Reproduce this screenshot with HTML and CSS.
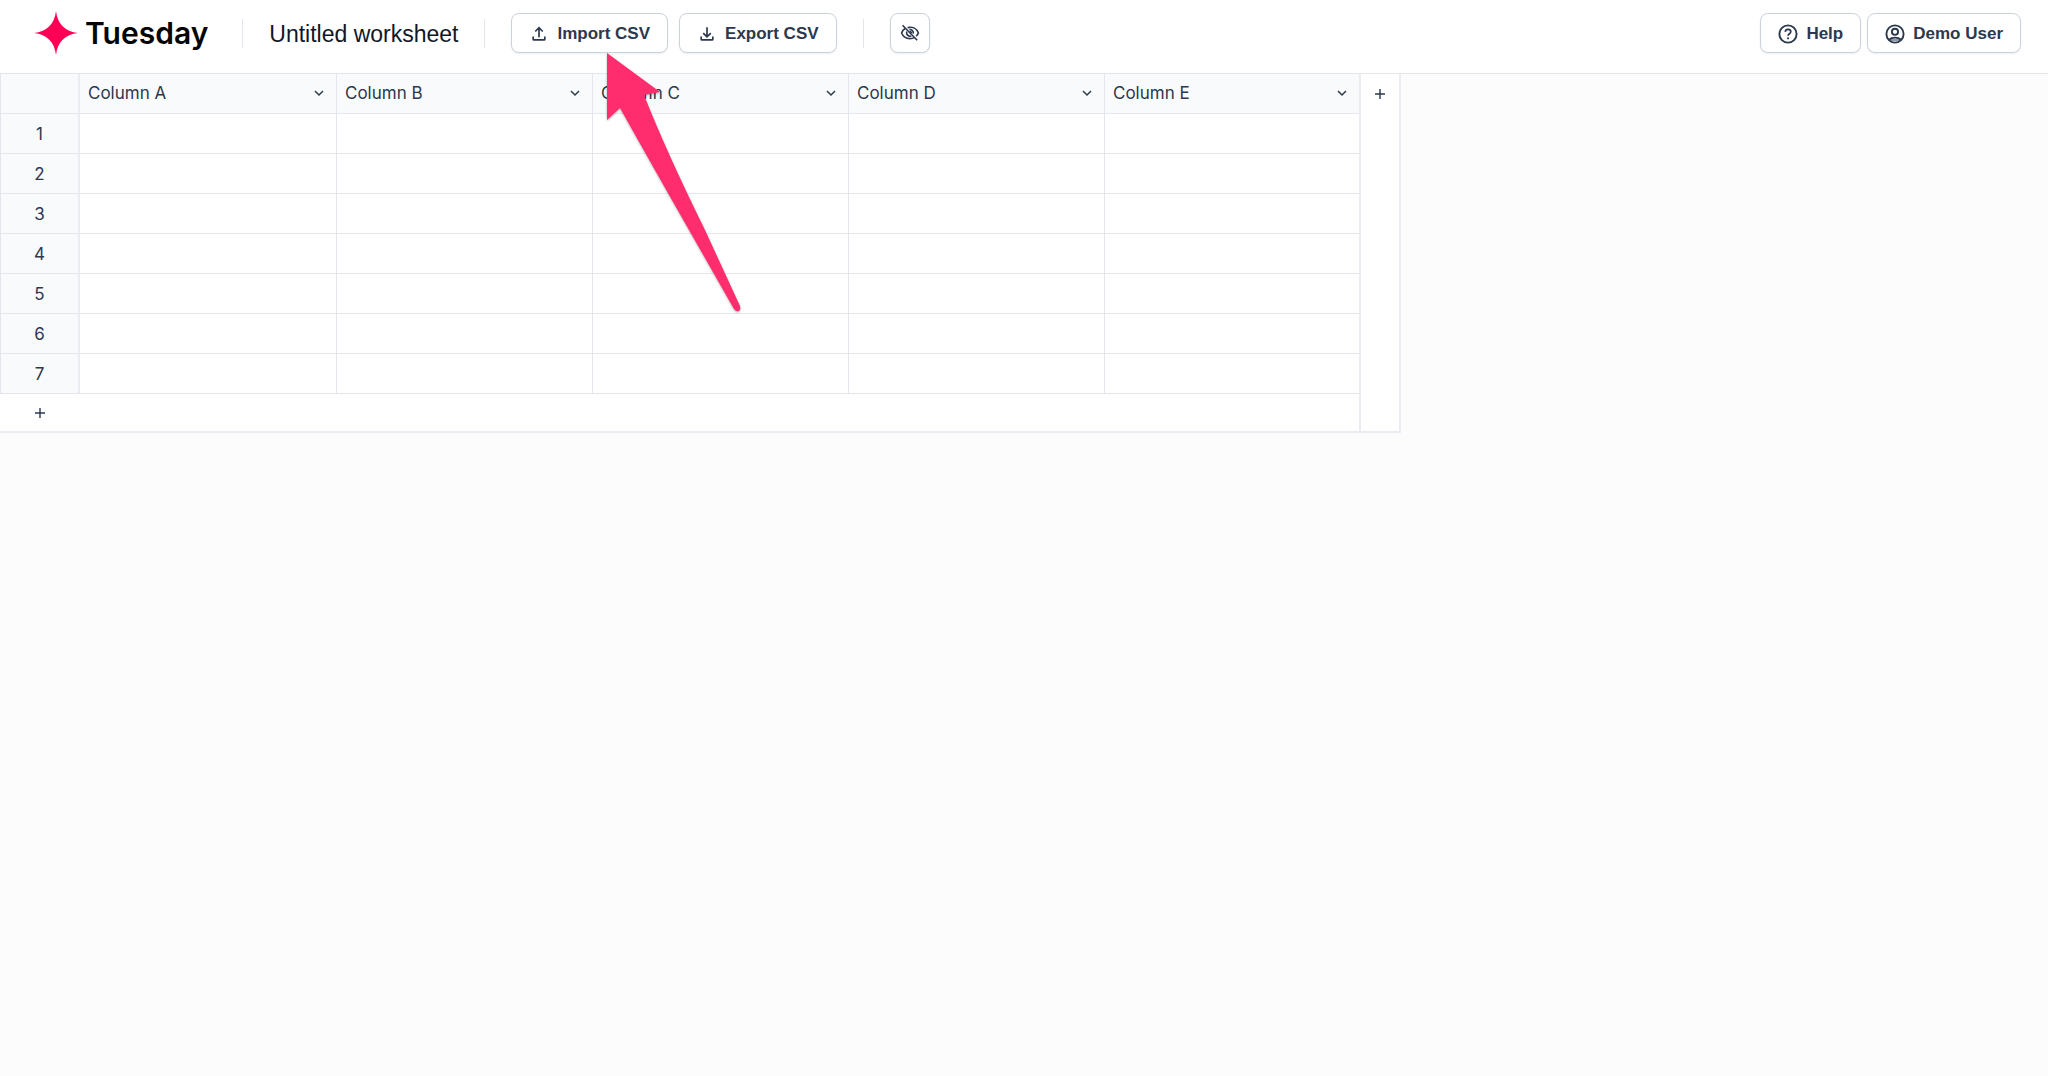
FILE: index.html
```html
<!DOCTYPE html>
<html lang="en">
<head>
    <meta charset="UTF-8">
    <meta name="viewport" content="width=device-width, initial-scale=1.0">
    <title>Untitled worksheet - Tuesday</title>
    <link rel="stylesheet" href="styles.css">
</head>
<body>
    <!-- Shared icons -->
    <svg class="sprite" aria-hidden="true">
        <symbol id="chevron" viewBox="0 0 12 12">
            <path d="M2 4l4 4 4-4" fill="none" stroke="currentColor" stroke-width="1.5"/>
        </symbol>
        <symbol id="plus" viewBox="0 0 12 12">
            <path d="M6 1v10M1 6h10" fill="none" stroke="currentColor" stroke-width="1.4"/>
        </symbol>
    </svg>

    <header class="toolbar">
        <a class="logo" href="#">
            <svg class="logo-mark" viewBox="0 0 44 44" aria-hidden="true">
                <path d="M22 0C23.500 13 31 20.500 44 22C31 23.500 23.500 31 22 44C20.500 31 13 23.500 0 22C13 20.500 20.500 13 22 0Z" fill="#ff0057"/>
            </svg>
            <span>Tuesday</span>
        </a>
        <span class="divider"></span>
        <h1 class="sheet-title">Untitled worksheet</h1>
        <span class="divider"></span>
        <div class="csv-actions">
            <button type="button" class="btn btn-csv">
                <svg class="icon" viewBox="0 0 24 24" aria-hidden="true">
                    <path d="M12 16V5M7.500 9L12 4.500L16.500 9M5 15v3.200q0 .8.800.8h12.400q.8 0 .8-.8V15" fill="none" stroke="currentColor" stroke-width="2"/>
                </svg>
                Import CSV
            </button>
            <button type="button" class="btn btn-csv">
                <svg class="icon" viewBox="0 0 24 24" aria-hidden="true">
                    <path d="M12 4v11M7.500 11L12 15.500L16.500 11M5 15v3.200q0 .8.800.8h12.400q.8 0 .8-.8V15" fill="none" stroke="currentColor" stroke-width="2"/>
                </svg>
                Export CSV
            </button>
        </div>
        <span class="divider"></span>
        <button type="button" class="btn btn-icon" aria-label="Hide columns">
            <svg class="icon" viewBox="0 0 20 20" aria-hidden="true">
                <g fill="none" stroke="currentColor" stroke-width="1.6">
                    <path d="M5.500 5.200C3.700 6.200 2.300 7.900 1.600 10C3 13.600 6.200 15.600 10 15.600C11.600 15.600 13 15.300 14.300 14.600M7.600 4.600C12.600 3.400 16.800 5.700 18.400 10C17.900 11.300 17.200 12.300 16.200 13.200"/>
                    <path d="M6.800 8.500C5.800 11.300 8.300 14 11.300 13M9.400 6.600C11.900 6.300 13.700 8.300 13.300 10.700M9.600 8.600C10.800 8.500 11.500 9.200 11.500 10.200"/>
                    <path d="M2.500 2.300L17.200 17.200"/>
                </g>
            </svg>
        </button>
        <div class="account">
            <button type="button" class="btn btn-account">
                <svg class="icon icon-lg" viewBox="0 0 24 24" aria-hidden="true">
                    <circle cx="12" cy="12" r="8.600" fill="none" stroke="currentColor" stroke-width="1.900"/>
                    <path d="M9.200 9.900C9.400 8.200 10.500 7.300 12 7.300C13.700 7.300 14.800 8.300 14.800 9.700C14.800 11.600 12.200 11.900 12.100 13.700" fill="none" stroke="currentColor" stroke-width="1.700"/>
                    <circle cx="12" cy="16.300" r="1.100" fill="currentColor"/>
                </svg>
                Help
            </button>
            <button type="button" class="btn btn-account">
                <svg class="icon icon-lg" viewBox="0 0 24 24" aria-hidden="true">
                    <g fill="none" stroke="currentColor" stroke-width="1.900">
                        <circle cx="12" cy="12" r="8.600"/>
                        <circle cx="12" cy="9.800" r="3.100"/>
                        <path d="M6 17.800C7.600 16.300 9.600 15.600 12 15.600C14.400 15.600 16.400 16.300 18 17.800"/>
                    </g>
                    <path d="M7.500 18h9" stroke="currentColor" stroke-width="1"/>
                </svg>
                Demo User
            </button>
        </div>
    </header>

    <main class="sheet">
        <table class="grid">
            <thead>
                <tr>
                    <td class="corner"></td>
                    <th scope="col" class="col-first"><div class="column-head">Column A<button type="button" class="menu-btn" aria-label="Column A menu"><svg><use href="#chevron"/></svg></button></div></th>
                    <th scope="col"><div class="column-head">Column B<button type="button" class="menu-btn" aria-label="Column B menu"><svg><use href="#chevron"/></svg></button></div></th>
                    <th scope="col"><div class="column-head">Column C<button type="button" class="menu-btn" aria-label="Column C menu"><svg><use href="#chevron"/></svg></button></div></th>
                    <th scope="col"><div class="column-head">Column D<button type="button" class="menu-btn" aria-label="Column D menu"><svg><use href="#chevron"/></svg></button></div></th>
                    <th scope="col"><div class="column-head">Column E<button type="button" class="menu-btn" aria-label="Column E menu"><svg><use href="#chevron"/></svg></button></div></th>
                </tr>
            </thead>
            <tbody>
                <tr><th scope="row">1</th><td></td><td></td><td></td><td></td><td></td></tr>
                <tr><th scope="row">2</th><td></td><td></td><td></td><td></td><td></td></tr>
                <tr><th scope="row">3</th><td></td><td></td><td></td><td></td><td></td></tr>
                <tr><th scope="row">4</th><td></td><td></td><td></td><td></td><td></td></tr>
                <tr><th scope="row">5</th><td></td><td></td><td></td><td></td><td></td></tr>
                <tr><th scope="row">6</th><td></td><td></td><td></td><td></td><td></td></tr>
                <tr><th scope="row">7</th><td></td><td></td><td></td><td></td><td></td></tr>
            </tbody>
            <tfoot>
                <tr>
                    <td colspan="6"><button type="button" class="add-btn add-row" aria-label="Add row"><svg><use href="#plus"/></svg></button></td>
                </tr>
            </tfoot>
        </table>
        <div class="add-column">
            <button type="button" class="add-btn" aria-label="Add column"><svg><use href="#plus"/></svg></button>
        </div>
    </main>

    <!-- Arrow pointing at Import CSV -->
    <svg class="pointer" viewBox="0 0 136 262" aria-hidden="true">
        <path d="M2 1L55 40L39 43Q62 101 100 178L135 254Q136 257 134 259Q131 260 129 257L88 185Q48 115 15 56L2 68Z" fill="#ff2d6d"/>
    </svg>
</body>
</html>
```
FILE: styles.css
```css
* {
    box-sizing: border-box;
}
body {
    margin: 0;
    background: #fcfcfc;
    color: #2b384e;
    font-family: Inter, sans-serif;
    font-size: 17px;
}
.sprite {
    display: none;
}
button {
    font: inherit;
    color: inherit;
    cursor: pointer;
}

/* Toolbar */
.toolbar {
    display: flex;
    align-items: center;
    gap: 26px;
    padding: 11px 27px 18px 34px;
    background: #fff;
    border-bottom: 1px solid #e4e6ee;
}
.logo {
    display: flex;
    align-items: center;
    gap: 7px;
    margin-right: 8px;
    color: #050505;
    font-size: 30px;
    font-weight: 600;
    line-height: 44px;
    text-decoration: none;
}
.logo-mark {
    width: 44px;
    height: 44px;
}
.divider {
    width: 1px;
    height: 29px;
    background: #e2e5ec;
}
.sheet-title {
    margin: 0;
    padding-top: 1px;
    color: #0f172a;
    font-family: "Liberation Sans", Arial, sans-serif;
    font-size: 23px;
    font-weight: 400;
    line-height: 30px;
}
.csv-actions {
    display: flex;
    gap: 11px;
}
.btn {
    display: flex;
    align-items: center;
    height: 40px;
    padding: 2px 17px 0 15px;
    background: #fff;
    border: 1px solid #cbd2dd;
    border-radius: 8px;
    box-shadow: 0 1px 2px rgba(15, 23, 42, 0.08);
    font-family: "Liberation Sans", Arial, sans-serif;
    font-weight: 700;
    white-space: nowrap;
}
.btn:hover {
    background: #f8f9fc;
}
.btn-csv {
    gap: 8px;
    padding-left: 17px;
}
.btn-icon {
    width: 40px;
    padding: 0;
    justify-content: center;
}
.btn-account {
    gap: 6px;
}
.icon {
    flex: none;
    width: 20px;
    height: 20px;
}
.icon-lg {
    width: 24px;
    height: 24px;
}
.account {
    display: flex;
    gap: 6px;
    margin-left: auto;
}

/* Worksheet */
.sheet {
    display: flex;
    width: max-content;
    background: #fff;
    border-bottom: 2px solid #ebecf2;
}
.grid {
    border-collapse: separate;
    border-spacing: 0;
}
.grid th,
.grid td {
    height: 40px;
    padding: 0;
    font-weight: 400;
}
.grid thead th {
    min-width: 256px;
}
.grid thead .col-first {
    min-width: 257px;
}
.grid thead th:last-child {
    min-width: 254px;
}
.grid thead th,
.grid tbody td {
    border-right: 1px solid #e4e6ed;
    border-bottom: 1px solid #e4e6ed;
}
.grid thead th,
.grid .corner,
.grid tbody th {
    background: #f9fafc;
}
.grid .corner,
.grid tbody th {
    min-width: 80px;
    border-left: 1px solid #e4e6ed;
    border-right: 2px solid #ebecf2;
    border-bottom: 1px solid #e4e6ed;
}
/* The add column strip draws the last vertical line */
.grid thead th:last-child,
.grid tbody td:last-child {
    border-right: none;
}
.grid tfoot td {
    height: 37px;
}
.column-head {
    display: flex;
    align-items: center;
    justify-content: space-between;
    padding: 0 11px 1px 8px;
}
.menu-btn,
.add-btn {
    display: flex;
    align-items: center;
    justify-content: center;
    padding: 0;
    background: none;
    border: none;
}
.menu-btn {
    width: 12px;
    height: 24px;
}
.menu-btn svg,
.add-btn svg {
    width: 12px;
    height: 12px;
}
.add-btn {
    width: 38px;
    height: 40px;
}
.add-row {
    width: 80px;
    height: 36px;
}
.add-column {
    border-left: 2px solid #ebecf2;
    border-right: 2px solid #ebecf2;
}

/* Sits over the toolbar and the worksheet */
.pointer {
    position: absolute;
    top: 52px;
    left: 605px;
    width: 136px;
    height: 262px;
    filter: drop-shadow(0 1px 1px rgba(0, 0, 0, 0.3));
    pointer-events: none;
}
```
